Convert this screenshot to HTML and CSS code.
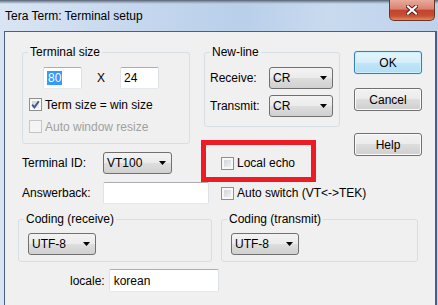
FILE: index.html
```html
<!DOCTYPE html>
<html lang="en">
<head>
    <meta charset="UTF-8">
    <title>Tera Term: Terminal setup</title>
    <link rel="stylesheet" href="styles.css">
</head>
<body>
    <div class="titlebar">
        <span class="title">Tera Term: Terminal setup</span>
        <button class="close">
            <svg width="12" height="10" viewBox="0 0 12 10">
                <path d="M2 1.5 L10 8.5 M10 1.5 L2 8.5" stroke="#5a1c14" stroke-width="4" stroke-linecap="square"/>
                <path d="M2 1.5 L10 8.5 M10 1.5 L2 8.5" stroke="#fff" stroke-width="2.2" stroke-linecap="square"/>
            </svg>
        </button>
    </div>

    <div class="client">
        <div class="top">
            <div class="main">
                <div class="group-row">
                    <fieldset class="group size-group">
                        <legend>Terminal size</legend>
                        <div class="size-row">
                            <span class="field size-field"><span class="selected">80</span></span>
                            <span class="times">X</span>
                            <span class="field size-field">24</span>
                        </div>
                        <label class="check">
                            <span class="box">
                                <svg width="11" height="11" viewBox="0 0 11 11">
                                    <path d="M2.2 5.6 L4.4 8.4 L8.8 2.2" fill="none" stroke="#3f5a94" stroke-width="1.9"/>
                                </svg>
                            </span>
                            Term size = win size
                        </label>
                        <label class="check disabled">
                            <span class="box"></span>
                            Auto window resize
                        </label>
                    </fieldset>

                    <fieldset class="group newline-group">
                        <legend>New-line</legend>
                        <div class="newline-grid">
                            <span>Receive:</span>
                            <span class="combo nl-combo">CR<svg class="arrow" width="7" height="4" viewBox="0 0 7 4"><polygon points="0,0 7,0 3.5,4"/></svg></span>
                            <span>Transmit:</span>
                            <span class="combo nl-combo">CR<svg class="arrow" width="7" height="4" viewBox="0 0 7 4"><polygon points="0,0 7,0 3.5,4"/></svg></span>
                        </div>
                    </fieldset>
                </div>

                <div class="option-grid">
                    <span>Terminal ID:</span>
                    <span class="combo id-combo">VT100<svg class="arrow" width="7" height="4" viewBox="0 0 7 4"><polygon points="0,0 7,0 3.5,4"/></svg></span>
                    <label class="check echo">
                        <span class="box"></span>
                        Local echo
                        <span class="highlight"></span>
                    </label>

                    <span>Answerback:</span>
                    <span class="field answer-field"></span>
                    <label class="check">
                        <span class="box"></span>
                        Auto switch (VT&lt;-&gt;TEK)
                    </label>
                </div>
            </div>

            <div class="buttons">
                <button class="btn default">OK</button>
                <button class="btn cancel">Cancel</button>
                <button class="btn help">Help</button>
            </div>
        </div>

        <div class="coding-row">
            <fieldset class="group coding-group receive">
                <legend>Coding (receive)</legend>
                <span class="combo code-combo">UTF-8<svg class="arrow" width="7" height="4" viewBox="0 0 7 4"><polygon points="0,0 7,0 3.5,4"/></svg></span>
            </fieldset>
            <fieldset class="group coding-group transmit">
                <legend>Coding (transmit)</legend>
                <span class="combo code-combo">UTF-8<svg class="arrow" width="7" height="4" viewBox="0 0 7 4"><polygon points="0,0 7,0 3.5,4"/></svg></span>
            </fieldset>
        </div>

        <div class="locale-row">
            <span>locale:</span>
            <span class="field locale-field">korean</span>
        </div>
    </div>
</body>
</html>
```

FILE: styles.css
```css
* {
    box-sizing: border-box;
}

body {
    margin: 0;
    width: 438px;
    height: 305px;
    overflow: hidden;
    background: linear-gradient(to right, #d9e5f3 0%, #c6d8ee 30%, #b9cfea 55%, #c9daef 75%, #bdd2eb 100%);
    font-family: "Liberation Sans", Arial, sans-serif;
    font-size: 12px;
    color: #000;
}

/* window chrome */

.titlebar {
    height: 31px;
    display: flex;
    align-items: flex-start;
    background: linear-gradient(#56606e 0, #95a4b9 2px, rgba(255, 255, 255, 0) 4px);
}

.title {
    padding: 9px 0 0 5px;
    line-height: 14px;
}

.close {
    margin: 0 3px 0 auto;
    width: 46px;
    height: 21px;
    padding: 0;
    border: 1px solid #6e322b;
    border-top: none;
    border-radius: 0 0 5px 5px;
    background: linear-gradient(#e9aa9c 0%, #d98270 45%, #c4432f 52%, #c9502f 80%, #e08a62 100%);
    display: flex;
    align-items: center;
    justify-content: center;
}

.client {
    margin: 0 1px 0 4px;
    height: 274px;
    background: #f0f0f0;
    border: 1px solid #4f5d86;
    border-right-width: 2px;
    border-bottom: none;
}

/* shared controls */

.group {
    margin: 0;
    padding: 0 5px 9px;
    border: 1px solid #d5dfe5;
    border-radius: 3px;
    min-width: 0;
}

.group legend {
    padding: 0 2px;
    line-height: 14px;
}

.field {
    height: 22px;
    padding: 0 3px;
    background: #fff;
    border: 1px solid;
    border-color: #abadb3 #dbdfe6 #e3e9ef #e2e3ea;
    border-radius: 2px;
    display: flex;
    align-items: center;
}

.selected {
    background: #3399ff;
    color: #fff;
    padding: 0 1px;
    line-height: 14px;
}

.check {
    display: flex;
    align-items: center;
    height: 15px;
    white-space: nowrap;
}

.box {
    flex: none;
    width: 13px;
    height: 13px;
    margin-right: 3px;
    border: 1px solid #8e8f8f;
    background: linear-gradient(135deg, #c9ced4, #f7f7f7);
    box-shadow: inset 0 0 0 2px #f8f8f8;
    display: flex;
}

.check.disabled {
    color: #a0a0a0;
}

.check.disabled .box {
    border-color: #c6c6c6;
    background: #f4f4f4;
    box-shadow: none;
}

.combo {
    height: 22px;
    padding: 0 5px 0 3px;
    border: 1px solid #707070;
    border-radius: 3px;
    background: linear-gradient(#f3f3f3, #ebebeb 50%, #dedede 50%, #d0d0d0);
    display: flex;
    align-items: center;
    justify-content: space-between;
}

.arrow {
    fill: #000;
}

.btn {
    width: 68px;
    height: 23px;
    padding: 0;
    font: inherit;
    color: #000;
    border: 1px solid #707070;
    border-radius: 3px;
    background: linear-gradient(#f2f2f2, #ebebeb 50%, #dddddd 50%, #cfcfcf);
    box-shadow: inset 0 0 0 1px #fbfbfb;
}

.btn.default {
    border-color: #3c7fb1;
    background: linear-gradient(#e6f5fd, #d4eefb 50%, #c2e5f8 50%, #b3ddf5);
    box-shadow: inset 0 0 0 1px #c9effd, 0 0 1px #7cc6f0;
}

/* layout */

.top {
    display: flex;
}

.main {
    flex: none;
    width: 336px;
    padding: 13px 0 0 17px;
}

.group-row {
    display: flex;
    align-items: flex-start;
}

.size-group {
    width: 168px;
}

.size-row {
    display: flex;
    align-items: center;
    margin: 8px 0 8px 15px;
}

.size-field {
    width: 39px;
}

.times {
    width: 38px;
    text-align: center;
}

.size-group .check {
    margin-left: 1px;
}

.size-group .check + .check {
    margin-top: 7px;
}

.newline-group {
    flex: none;
    width: 136px;
    margin-left: 14px;
}

.newline-grid {
    display: grid;
    grid-template-columns: 59px 64px;
    row-gap: 6px;
    align-items: center;
    margin-top: 8px;
}

.option-grid {
    display: grid;
    grid-template-columns: 81px 118px minmax(0, 1fr);
    grid-auto-rows: 22px;
    row-gap: 8px;
    align-items: center;
    margin-top: 8px;
}

.option-grid .check {
    height: 22px;
}

.id-combo {
    width: 69px;
}

.answer-field {
    width: 106px;
}

.echo {
    position: relative;
}

.highlight {
    position: absolute;
    left: -20px;
    top: -12px;
    width: 115px;
    height: 42px;
    border: 5px solid #ed1c24;
}

.buttons {
    margin: 19px 13px 0 auto;
    display: flex;
    flex-direction: column;
}

.cancel {
    margin-top: 14px;
}

.help {
    margin-top: 22px;
}

.coding-row {
    display: flex;
    margin-top: 8px;
    padding-left: 13px;
}

.coding-group {
    padding-bottom: 6px;
}

.coding-group.receive {
    width: 194px;
}

.coding-group.transmit {
    width: 197px;
    margin-left: 9px;
}

.code-combo {
    width: 68px;
    margin: 7px 0 0 4px;
}

.locale-row {
    display: flex;
    align-items: center;
    gap: 4px;
    margin-top: 7px;
    padding-left: 65px;
}

.locale-field {
    width: 110px;
    height: 23px;
    padding-left: 4px;
}
```
